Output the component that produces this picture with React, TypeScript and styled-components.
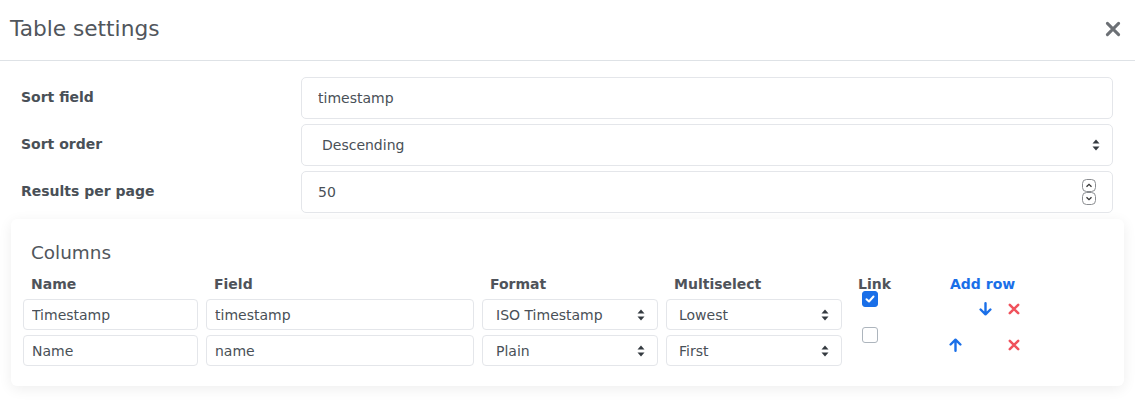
import React from "react";
import styled, { createGlobalStyle } from "styled-components";

const Global = createGlobalStyle`
  html, body { margin: 0; padding: 0; background: #fff; }
  body { font-family: "DejaVu Sans", "Liberation Sans", sans-serif; color: #495057; }
  * { box-sizing: border-box; }
`;

const Modal = styled.div`
  width: 1135px;
  background: #fff;
`;

const Header = styled.div`
  height: 61px;
  display: flex;
  align-items: center;
  justify-content: space-between;
  padding: 0 14px 2px 10px;
  border-bottom: 1px solid #dee2e6;
`;

const Title = styled.h5`
  margin: 0;
  font-size: 21.7px;
  font-weight: 400;
  color: #51565c;
  line-height: 28px;
`;

const CloseBtn = styled.button`
  border: 0;
  background: transparent;
  padding: 0;
  display: flex;
  color: #6c7075;
  cursor: pointer;
`;

const Body = styled.div`
  padding: 16px 11px 16px 11px;
  display: flex;
  flex-direction: column;
  gap: 5px;
`;

const FormRow = styled.div`
  display: flex;
  align-items: flex-start;
  padding: 0 11px 0 10px;
`;

const Label = styled.label`
  width: 280px;
  flex: none;
  font-size: 14px;
  font-weight: 700;
  line-height: 20px;
  padding-top: 10px;
  color: #495057;
`;

const FieldBox = styled.div`
  position: relative;
  flex: 1;
  height: 42px;
  display: flex;
  align-items: center;
  border: 1px solid #e4e6ea;
  border-radius: 5px;
  background: #fff;
`;

const TextInput = styled.input<{ $pad?: number }>`
  border: 0;
  outline: none;
  background: transparent;
  width: 100%;
  height: 100%;
  padding: 0 0 0 ${(p) => p.$pad ?? 16}px;
  font-family: inherit;
  font-size: 14px;
  color: #495057;
  appearance: textfield;
  &::-webkit-inner-spin-button, &::-webkit-outer-spin-button { -webkit-appearance: none; margin: 0; }
`;

const Select = styled.select<{ $pad?: number }>`
  appearance: none;
  -webkit-appearance: none;
  border: 0;
  outline: none;
  background: transparent;
  width: 100%;
  height: 100%;
  padding: 0 0 0 ${(p) => p.$pad ?? 20}px;
  font-family: inherit;
  font-size: 14px;
  color: #495057;
`;

const Caret = styled.svg<{ $right: number }>`
  position: absolute;
  right: ${(p) => p.$right}px;
  top: 50%;
  transform: translateY(-50%);
  pointer-events: none;
`;

const Spinner = styled.svg`
  flex: none;
  margin-right: 16px;
`;

const Card = styled.div`
  margin-top: 1px;
  background: #fff;
  border-radius: 6px;
  box-shadow: 0 3px 14px rgba(0, 0, 0, 0.07);
  padding: 22px 20px 20px 8px;
`;

const CardTitle = styled.div`
  font-size: 18.4px;
  line-height: 24px;
  color: #51565c;
  padding-left: 12px;
  margin-bottom: 9px;
`;

const Grid = styled.div`
  display: grid;
  grid-template-columns: 183px 276px 184px 184px 92px 1fr;
  row-gap: 5px;
`;

const HeadCell = styled.div<{ $link?: boolean }>`
  padding: 0 4px 0 12px;
  font-size: 14px;
  font-weight: 700;
  line-height: 20px;
  color: ${(p) => (p.$link ? "#1a6fe8" : "#4f535a")};
  cursor: ${(p) => (p.$link ? "pointer" : "default")};
`;

const Cell = styled.div`
  padding: 0 4px;
`;

const SmallBox = styled.div`
  position: relative;
  height: 31px;
  display: flex;
  align-items: center;
  border: 1px solid #e4e6ea;
  border-radius: 4px;
  background: #fff;
`;

const CheckCell = styled.div`
  padding: 0 4px 0 16px;
  margin-top: -8px;
`;

const CheckBox = styled.span<{ $on?: boolean }>`
  display: flex;
  align-items: center;
  justify-content: center;
  width: 16px;
  height: 16px;
  border-radius: 3px;
  border: 1px solid ${(p) => (p.$on ? "#1a6fe8" : "#adb5bd")};
  background: ${(p) => (p.$on ? "#1a6fe8" : "#fff")};
`;

const Actions = styled.div`
  display: flex;
  align-items: flex-start;
  padding: 3px 0 0 2px;
`;

const Slot = styled.span<{ $w: number }>`
  width: ${(p) => p.$w}px;
  height: 14px;
  display: flex;
  align-items: center;
  justify-content: center;
  cursor: pointer;
`;

const DblCaret = ({ right }: { right: number }) => (
  <Caret $right={right} width="8" height="12" viewBox="0 0 8 12">
    <path d="M4 0.5 L7.5 4.6 H0.5 Z M4 11.5 L7.5 7.4 H0.5 Z" fill="#343a40" />
  </Caret>
);

const ArrowIcon = ({ up }: { up?: boolean }) => (
  <svg width="13" height="14" viewBox="0 0 13 14" style={{ transform: up ? "rotate(180deg)" : undefined }}>
    <path d="M6.5 1.2 V12.3 M1.6 7.5 L6.5 12.3 L11.4 7.5" fill="none" stroke="#1a6fe8" strokeWidth="2.4" strokeLinecap="round" strokeLinejoin="round" />
  </svg>
);

const XIcon = ({ size, color, w }: { size: number; color: string; w: number }) => (
  <svg width={size} height={size} viewBox="0 0 10 10">
    <path d="M1.5 1.5 L8.5 8.5 M8.5 1.5 L1.5 8.5" stroke={color} strokeWidth={w} strokeLinecap="round" />
  </svg>
);

const rows = [
  { name: "Timestamp", field: "timestamp", format: "ISO Timestamp", multi: "Lowest", link: true, up: false, down: true },
  { name: "Name", field: "name", format: "Plain", multi: "First", link: false, up: true, down: false },
];

export default function App() {
  return (
    <Modal>
      <Global />
      <Header>
        <Title>Table settings</Title>
        <CloseBtn aria-label="Close">
          <XIcon size={16} color="#6c7075" w={1.9} />
        </CloseBtn>
      </Header>
      <Body>
        <FormRow>
          <Label>Sort field</Label>
          <FieldBox>
            <TextInput defaultValue="timestamp" />
          </FieldBox>
        </FormRow>
        <FormRow>
          <Label>Sort order</Label>
          <FieldBox>
            <Select defaultValue="Descending">
              <option>Ascending</option>
              <option>Descending</option>
            </Select>
            <DblCaret right={12} />
          </FieldBox>
        </FormRow>
        <FormRow>
          <Label>Results per page</Label>
          <FieldBox>
            <TextInput type="number" defaultValue={50} />
            <Spinner width="14" height="26" viewBox="0 0 14 26">
              <rect x="0.5" y="0.5" width="13" height="12" rx="4" fill="#fff" stroke="#8a8d91" />
              <rect x="0.5" y="13.5" width="13" height="12" rx="4" fill="#fff" stroke="#8a8d91" />
              <path d="M4.5 7.8 L7 5.3 L9.5 7.8" fill="none" stroke="#333" strokeWidth="1.3" />
              <path d="M4.5 18.2 L7 20.7 L9.5 18.2" fill="none" stroke="#333" strokeWidth="1.3" />
            </Spinner>
          </FieldBox>
        </FormRow>
        <Card>
          <CardTitle>Columns</CardTitle>
          <Grid>
            <HeadCell>Name</HeadCell>
            <HeadCell>Field</HeadCell>
            <HeadCell>Format</HeadCell>
            <HeadCell>Multiselect</HeadCell>
            <HeadCell>Link</HeadCell>
            <HeadCell $link>Add row</HeadCell>
            {rows.map((r) => (
              <React.Fragment key={r.name}>
                <Cell>
                  <SmallBox>
                    <TextInput $pad={8} defaultValue={r.name} />
                  </SmallBox>
                </Cell>
                <Cell>
                  <SmallBox>
                    <TextInput $pad={8} defaultValue={r.field} />
                  </SmallBox>
                </Cell>
                <Cell>
                  <SmallBox>
                    <Select $pad={13} defaultValue={r.format}>
                      <option>ISO Timestamp</option>
                      <option>Plain</option>
                    </Select>
                    <DblCaret right={12} />
                  </SmallBox>
                </Cell>
                <Cell>
                  <SmallBox>
                    <Select $pad={12} defaultValue={r.multi}>
                      <option>Lowest</option>
                      <option>First</option>
                    </Select>
                    <DblCaret right={12} />
                  </SmallBox>
                </Cell>
                <CheckCell>
                  <CheckBox $on={r.link}>
                    {r.link && (
                      <svg width="10" height="8" viewBox="0 0 10 8">
                        <path d="M1.5 4.2 L4 6.5 L8.5 1.5" fill="none" stroke="#fff" strokeWidth="2" strokeLinecap="round" strokeLinejoin="round" />
                      </svg>
                    )}
                  </CheckBox>
                </CheckCell>
                <Actions>
                  <Slot $w={30}>{r.up && <ArrowIcon up />}</Slot>
                  <Slot $w={30}>{r.down && <ArrowIcon />}</Slot>
                  <Slot $w={28}>
                    <XIcon size={12} color="#f0525c" w={2.1} />
                  </Slot>
                </Actions>
              </React.Fragment>
            ))}
          </Grid>
        </Card>
      </Body>
    </Modal>
  );
}
